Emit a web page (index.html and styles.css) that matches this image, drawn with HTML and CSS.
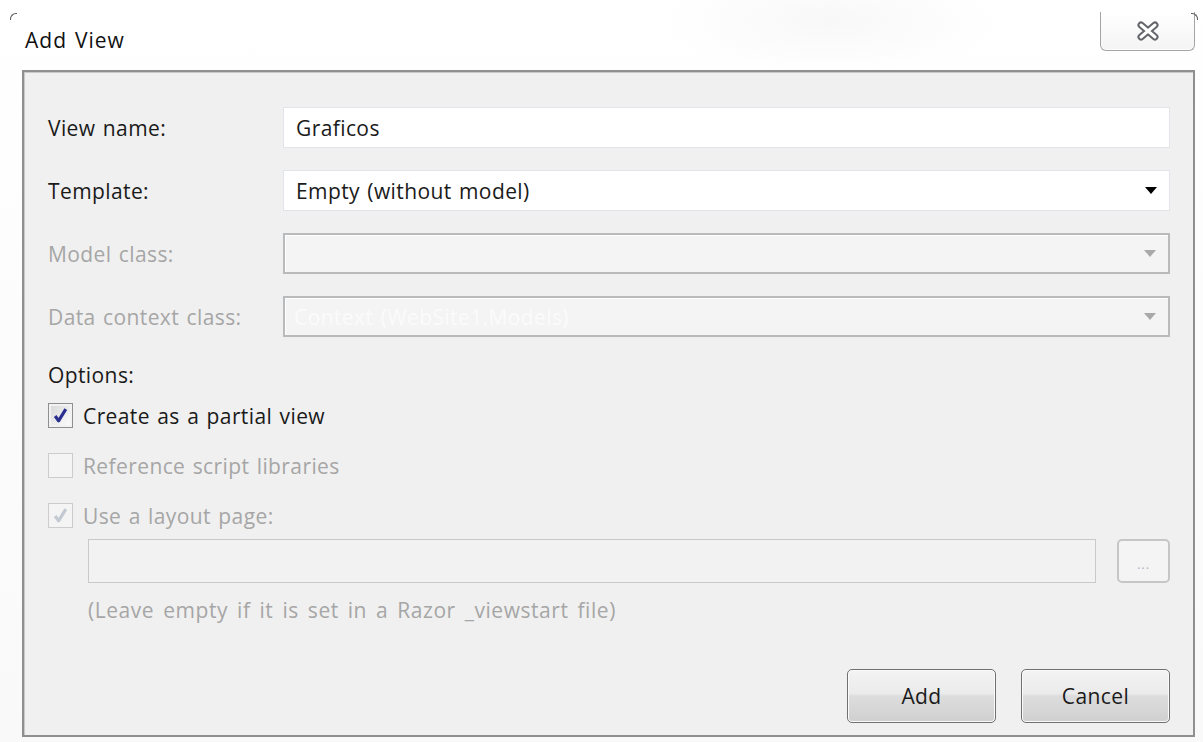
FILE: index.html
```html
<!DOCTYPE html>
<html lang="en">
<head>
<meta charset="utf-8">
<title>Add View</title>
<link rel="stylesheet" href="styles.css">
</head>
<body>
<div class="window">
  <span class="corner corner-left"></span>
  <span class="corner corner-right"></span>
  <div class="titlebar">
    <h1 class="title">Add View</h1>
    <button class="close" type="button" aria-label="Close">
      <svg width="26" height="22" viewBox="0 0 26 22">
        <path d="M6 5 L20 17 M20 5 L6 17" stroke="#64666b" stroke-width="7" stroke-linecap="round" fill="none"/>
        <path d="M6 5 L20 17 M20 5 L6 17" stroke="#ffffff" stroke-width="3" stroke-linecap="round" fill="none"/>
      </svg>
    </button>
  </div>

  <div class="panel">
    <div class="form">
      <label class="label">View name:</label>
      <div class="field field-text">Graficos</div>

      <label class="label">Template:</label>
      <div class="field field-select">
        <span>Empty (without model)</span>
        <span class="arrow"></span>
      </div>

      <label class="label disabled">Model class:</label>
      <div class="field field-select is-disabled">
        <span></span>
        <span class="arrow"></span>
      </div>

      <label class="label disabled">Data context class:</label>
      <div class="field field-select is-disabled">
        <span class="ghost">Context (WebSite1.Models)</span>
        <span class="arrow"></span>
      </div>
    </div>

    <div class="options-title">Options:</div>

    <div class="options">
      <div class="check-row">
        <span class="box checked">
          <svg width="17" height="17" viewBox="0 0 16 16"><path d="M3 8.5 L6.2 13 L13 2" stroke="#2b2f8f" stroke-width="3" fill="none" stroke-linejoin="round"/></svg>
        </span>
        <span class="check-text">Create as a partial view</span>
      </div>
      <div class="check-row">
        <span class="box box-disabled"></span>
        <span class="check-text disabled">Reference script libraries</span>
      </div>
      <div class="check-row">
        <span class="box box-disabled">
          <svg width="17" height="17" viewBox="0 0 16 16"><path d="M3 8.5 L6.2 13 L13 2" stroke="#c3c9d2" stroke-width="3" fill="none" stroke-linejoin="round"/></svg>
        </span>
        <span class="check-text disabled">Use a layout page:</span>
      </div>
    </div>

    <div class="layout-block">
      <div class="layout-row">
        <div class="layout-input"></div>
        <button class="browse" type="button">...</button>
      </div>
      <div class="hint">(Leave empty if it is set in a Razor _viewstart file)</div>
    </div>

    <div class="actions">
      <button class="btn" type="button">Add</button>
      <button class="btn" type="button">Cancel</button>
    </div>
  </div>
</div>
</body>
</html>
```

FILE: styles.css
```css
html, body {
  margin: 0;
  padding: 0;
}

body {
  width: 1203px;
  height: 742px;
  overflow: hidden;
  background: #ffffff;
  font-family: "Open Sans", "Noto Sans", "Liberation Sans", sans-serif;
  font-size: 21px;
  letter-spacing: 0.4px;
  word-spacing: 1.5px;
  color: #1a1a1a;
}

/* glass frame around the dialog */
.window {
  position: relative;
  height: 742px;
  background:
    radial-gradient(ellipse 220px 70px at 830px 20px, rgba(230, 230, 230, 0.28), rgba(255, 255, 255, 0) 75%),
    linear-gradient(#ffffff, #f9f9f9);
  display: flex;
  flex-direction: column;
}

.corner {
  position: absolute;
  top: 13px;
  width: 6px;
  height: 6px;
  border-top: 1px solid #555;
}
.corner-left {
  left: 10px;
  border-left: 1px solid #555;
  border-top-left-radius: 6px;
}
.corner-right {
  right: 5px;
  border-right: 1px solid #555;
  border-top-right-radius: 6px;
}

.titlebar {
  height: 70px;
  display: flex;
  align-items: flex-start;
  justify-content: space-between;
  padding: 0 8px 0 25px;
}

.title {
  margin: 26px 0 0 0;
  font-size: 21px;
  font-weight: 400;
  color: #111;
  letter-spacing: 1px;
}

.close {
  margin-top: 12px;
  width: 95px;
  height: 39px;
  border: 1px solid #a4a4a4;
  border-top: none;
  border-radius: 0 0 6px 6px;
  background: linear-gradient(#ffffff, #f4f4f4);
  box-shadow: inset 0 -1px 0 #fff;
  display: flex;
  align-items: center;
  justify-content: center;
  padding: 0;
}

/* content panel */
.panel {
  margin: 0 8px 5px 22px;
  flex: 1;
  background: #f0f0f0;
  border: 2px solid #8f8f8f;
  box-shadow: inset 1px 1px 0 #c9c9c9;
  padding: 35px 23px 10px 24px;
  display: flex;
  flex-direction: column;
}

.form {
  display: grid;
  grid-template-columns: 235px 1fr;
  row-gap: 22px;
  align-items: center;
}

.label {
  color: #1a1a1a;
}

.disabled {
  color: #a6a6a6;
}

.field {
  height: 41px;
  box-sizing: border-box;
  display: flex;
  align-items: center;
  padding: 0 10px 0 12px;
}

.field-text,
.field-select {
  background: #ffffff;
  border: 1px solid #e1e4e8;
}

.field-select {
  justify-content: space-between;
}

.arrow {
  width: 0;
  height: 0;
  border-left: 6px solid transparent;
  border-right: 6px solid transparent;
  border-top: 7px solid #000;
  margin-right: 2px;
}

.field.is-disabled {
  background: #f4f4f4;
  border: 2px solid #b8babc;
  box-shadow: inset 1px 1px 0 #ffffff;
  padding-left: 9px;
}

.is-disabled .arrow {
  border-top-color: #a9a9a9;
}

.ghost {
  color: #fbfbfb;
}

.options-title {
  margin-top: 24px;
}

.options {
  margin-top: 14px;
  display: flex;
  flex-direction: column;
  gap: 25px;
}

.check-row {
  display: flex;
  align-items: center;
  gap: 10px;
  height: 25px;
}

.box {
  width: 25px;
  height: 25px;
  box-sizing: border-box;
  display: flex;
  align-items: center;
  justify-content: center;
}

.box.checked {
  border: 1px solid #8e8f8f;
  background: linear-gradient(135deg, #d6d6d6, #ffffff);
  box-shadow: inset 0 0 0 2px #f2f2f2;
}

.box.box-disabled {
  border: 1px solid #cccccc;
  background: #f4f4f4;
}

.layout-block {
  margin-top: 11px;
  padding-left: 40px;
}

.layout-row {
  display: flex;
  align-items: stretch;
  gap: 21px;
  height: 44px;
}

.layout-input {
  flex: 1;
  box-sizing: border-box;
  background: #f2f2f2;
  border: 1px solid #c9c9c9;
}

.browse {
  width: 53px;
  box-sizing: border-box;
  border: 2px solid #c4c6c8;
  border-radius: 5px;
  background: #f4f4f4;
  color: #b7b0c4;
  font-family: inherit;
  font-size: 13px;
  letter-spacing: 1px;
  padding: 6px 0 0 0;
}

.hint {
  margin-top: 13px;
  color: #a6a6a6;
  letter-spacing: 0.55px;
  word-spacing: 3px;
}

.actions {
  margin-top: auto;
  display: flex;
  justify-content: flex-end;
  gap: 25px;
  padding-bottom: 2px;
}

.btn {
  width: 149px;
  height: 54px;
  border: 1px solid #707070;
  border-radius: 5px;
  background: linear-gradient(#f3f3f3 0%, #ebebeb 45%, #dddddd 50%, #cfcfcf 100%);
  box-shadow: inset 0 0 0 1px #fbfbfb;
  font-family: inherit;
  font-size: 21px;
  letter-spacing: 0.4px;
  color: #1a1a1a;
  padding: 0;
}
```
